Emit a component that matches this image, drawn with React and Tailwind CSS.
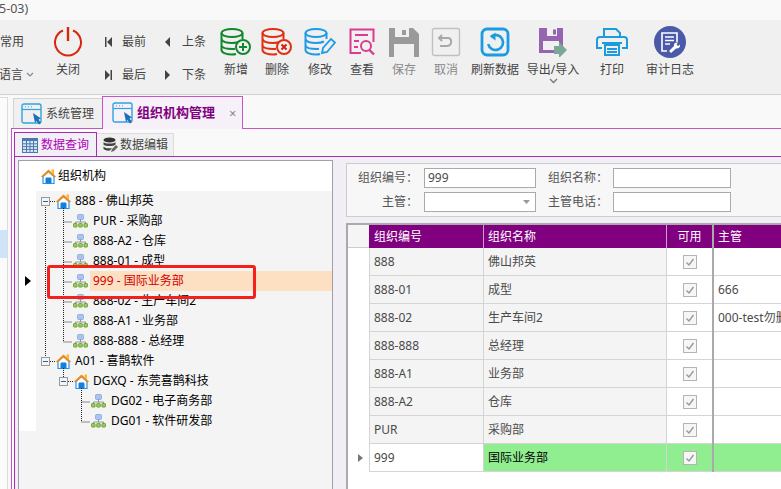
import React from "react";

function Power() {
    return (
        <svg width="30" height="30" viewBox="0 0 30 30" fill="none" stroke="#d9250c" strokeWidth="2">
            <path d="M10 3.5 A13 13 0 1 0 20 3.5" />
            <path d="M15 0 V14" stroke="#d9250c" strokeWidth="2.4" />
        </svg>
    );
}

function DbStack({ color }) {
    return (
        <g fill="none" stroke={color} strokeWidth="2">
            <ellipse cx="12" cy="6" rx="10.5" ry="4" />
            <path d="M1.5 6 V23 C1.5 26 7 27.5 12 27.5 C14 27.5 15 27.3 16 27" />
            <path d="M22.5 6 V12" />
            <path d="M1.5 12.5 C3 15.5 8 16 12 16 C15 16 18 15.5 20 14.5" />
            <path d="M1.5 19 C3 21.5 8 22 12 22 C13 22 14 22 15 21.8" />
        </g>
    );
}

function DbAdd() {
    return (
        <svg width="32" height="30" viewBox="0 0 32 30">
            <DbStack color="#12882c" />
            <circle cx="23" cy="20" r="7" fill="#f0f0f0" stroke="#12882c" strokeWidth="2" />
            <path d="M23 16 V24 M19 20 H27" stroke="#12882c" strokeWidth="2" />
        </svg>
    );
}

function DbDelete() {
    return (
        <svg width="32" height="30" viewBox="0 0 32 30">
            <DbStack color="#e0300f" />
            <circle cx="23" cy="20" r="7" fill="#f0f0f0" stroke="#e0300f" strokeWidth="2" />
            <path d="M20.5 17.5 L25.5 22.5 M25.5 17.5 L20.5 22.5" stroke="#d0200f" strokeWidth="2" />
        </svg>
    );
}

function DbEdit() {
    return (
        <svg width="32" height="30" viewBox="0 0 32 30">
            <DbStack color="#1f9be6" />
            <path d="M18 26 L19 21 L27 12 L31 15.5 L23 25 Z" fill="#f0f0f0" stroke="#1f9be6" strokeWidth="1.8" />
        </svg>
    );
}

function ViewDoc() {
    return (
        <svg width="30" height="30" viewBox="0 0 30 30" fill="none" stroke="#dc3a8e" strokeWidth="2">
            <path d="M14 26 H3.5 V2.5 H26.5 V15" />
            <path d="M8 8 H21 M7 14 H12 M7 20 H11" />
            <circle cx="19" cy="19" r="5" />
            <path d="M22.5 23 L27 27.5" strokeWidth="2.4" />
        </svg>
    );
}

function Floppy() {
    return (
        <svg width="30" height="30" viewBox="0 0 30 30">
            <path d="M0 1 H24 L30 7 V30 H0 Z" fill="#9a9a9a" />
            <rect x="6" y="1" width="14" height="9" fill="#f0f0f0" />
            <rect x="13" y="3" width="4" height="5" fill="#9a9a9a" />
            <rect x="5" y="17" width="20" height="13" fill="#f0f0f0" />
        </svg>
    );
}

function UndoBox() {
    return (
        <svg width="30" height="30" viewBox="0 0 30 30" fill="none">
            <rect x="1.5" y="1.5" width="27" height="27" rx="2" stroke="#c0c0c0" strokeWidth="1.4" />
            <path d="M11 8 L8 11 L11 14" stroke="#a8a8a8" strokeWidth="2" />
            <path d="M8.5 11 H17 C20 11 20.5 14 20 16 C19.5 18 18 19 16 19 H9" stroke="#a8a8a8" strokeWidth="2" />
        </svg>
    );
}

function RefreshBox() {
    return (
        <svg width="30" height="30" viewBox="0 0 30 30" fill="none">
            <rect x="2" y="2" width="26" height="26" rx="5" stroke="#1b9be2" strokeWidth="2.8" />
            <path d="M11 9.5 A7.5 7.5 0 1 1 8.2 17" stroke="#1b9be2" strokeWidth="2.6" />
            <path d="M15.5 5.5 L10 9.5 L15.5 13.5 Z" fill="#1b9be2" />
        </svg>
    );
}

function ExportIcon() {
    return (
        <svg width="30" height="30" viewBox="0 0 30 30">
            <path d="M1 1 H25 V26 H1 Z" fill="#9565b0" />
            <rect x="9" y="1" width="10" height="8" fill="#f0f0f0" />
            <rect x="15" y="2.5" width="3" height="5" fill="#9565b0" />
            <rect x="5" y="14" width="16" height="9" fill="#f0f0f0" />
            <path d="M16 19 H21 V15 L29 23 L21 31 V27 H16 Z" fill="#7ba896" />
        </svg>
    );
}

function Printer() {
    return (
        <svg width="34" height="30" viewBox="0 0 34 30" fill="none" stroke="#1c9cdf" strokeWidth="2">
            <path d="M9 9 V2 H21 L25 6 V9" />
            <path d="M7 21 H2 V13 C2 11 3 10 5 10 H29 C31 10 32 11 32 13 V21 H27" />
            <path d="M7 16 H27" />
            <rect x="10" y="18" width="14" height="10" fill="#f0f0f0" />
            <path d="M12 22 H22 M12 25 H22" />
        </svg>
    );
}

function AuditIcon() {
    return (
        <svg width="32" height="32" viewBox="0 0 32 32" fill="none">
            <circle cx="16" cy="16" r="16" fill="#4a5aa9" />
            <path d="M13 25 H8 V7 H23 V16" stroke="#fff" strokeWidth="1.6" />
            <path d="M11 11 H20 M11 14.5 H20 M11 18 H16" stroke="#fff" strokeWidth="1.5" />
            <path d="M15 25 L20 20 C19.5 18 21 16 24 16.5 L22.5 18.5 L24 20 L26 18.5 C26.5 21 24.5 23 22 22.5 L17 27 Z" fill="#fff" />
        </svg>
    );
}

function WindowIcon() {
    return (
        <svg width="21" height="22" viewBox="0 0 21 22" fill="none">
            <rect x="1" y="1" width="19" height="19" rx="2" stroke="#2ea3e0" strokeWidth="1.4" />
            <path d="M1 6.5 H20" stroke="#2ea3e0" strokeWidth="1.2" />
            <path d="M4 3.8 H5 M7 3.8 H8 M10 3.8 H11" stroke="#2ea3e0" />
            <path d="M12 10 L20 15.5 L17.5 16.5 L20 20 L18 21.5 L15.5 18 L14 20 Z" fill="#1e6fb8" />
        </svg>
    );
}

function GridIcon() {
    return (
        <svg width="16" height="15" viewBox="0 0 16 15">
            <rect x="0" y="0" width="16" height="15" fill="#4c78ae" />
            <rect x="1" y="3" width="14" height="11" fill="#dbe6f2" />
            <path d="M4.5 3 V14 M8 3 V14 M11.5 3 V14 M1 5.8 H15 M1 8.6 H15 M1 11.4 H15" stroke="#4c78ae" />
        </svg>
    );
}

function DbDark() {
    return (
        <svg width="15" height="16" viewBox="0 0 15 16">
            <ellipse cx="6.5" cy="3" rx="6" ry="2.6" fill="#333" />
            <path d="M0.5 5 C2 7 11 7 12.5 5 V7.5 C11 9.5 2 9.5 0.5 7.5 Z" fill="#444" />
            <path d="M0.5 9.5 C2 11.5 7 11.5 9 11 L7 13.5 C4 14 1.5 13 0.5 12 Z" fill="#444" />
            <path d="M8 15 L9 12 L13 8 L15 10 L11 14 Z" fill="#666" />
        </svg>
    );
}

function HomeIcon() {
    return (
        <svg width="15" height="15" viewBox="0 0 15 15">
            <path d="M10.5 0.5 H13 V5.5 L10.5 3 Z" fill="#f7b733" />
            <path d="M2 7.5 L7.5 2.5 L13 7.5 V14.5 H2 Z" fill="#fdfdfd" stroke="#2b93e6" strokeWidth="1.2" />
            <path d="M0 7.5 L7.5 0.5 L15 7.5 L13.6 8.6 L7.5 3.2 L1.4 8.6 Z" fill="#f28a12" />
            <rect x="4.5" y="8.5" width="6" height="6" rx="1.2" fill="#1380dc" />
        </svg>
    );
}

function OrgIcon() {
    return (
        <svg width="15" height="14" viewBox="0 0 15 14">
            <rect x="4.5" y="0.5" width="6" height="5" rx="1" fill="#a9c4f2" stroke="#7d9fd8" strokeWidth="0.7" />
            <path d="M7.5 5.5 V8 M2.5 9.5 V8 H12.5 V9.5" stroke="#8a8a8a" fill="none" strokeWidth="0.9" />
            <rect x="0.5" y="9.5" width="3.6" height="3.6" rx="0.6" fill="#9cc95c" stroke="#5f9a2a" strokeWidth="0.8" />
            <rect x="5.7" y="9.5" width="3.6" height="3.6" rx="0.6" fill="#9cc95c" stroke="#5f9a2a" strokeWidth="0.8" />
            <rect x="10.9" y="9.5" width="3.6" height="3.6" rx="0.6" fill="#9cc95c" stroke="#5f9a2a" strokeWidth="0.8" />
        </svg>
    );
}

function Check() {
    return (
        <div className="flex h-[14px] w-[14px] items-center justify-center border border-[#b4b4b4] bg-[#f6f6f6]">
            <svg width="10" height="10" viewBox="0 0 10 10" fill="none" stroke="#999" strokeWidth="1.4">
                <path d="M1.5 5.5 L4 8 L8.5 2" />
            </svg>
        </div>
    );
}

const TOOLS = [
    { label: "新增", width: "w-[48px]", icon: <DbAdd /> },
    { label: "删除", width: "w-[34px]", icon: <DbDelete /> },
    { label: "修改", width: "w-[52px]", icon: <DbEdit /> },
    { label: "查看", width: "w-[32px]", icon: <ViewDoc /> },
    { label: "保存", width: "w-[52px]", icon: <Floppy />, muted: true },
    { label: "取消", width: "w-[32px]", icon: <UndoBox />, muted: true },
    { label: "刷新数据", width: "w-[66px]", icon: <RefreshBox /> },
    { label: "导出/导入", width: "w-[50px]", icon: <ExportIcon />, more: true },
    { label: "打印", width: "w-[68px]", icon: <Printer /> },
    { label: "审计日志", width: "w-[48px]", icon: <AuditIcon /> },
];

function ToolButton({ label, width, icon, muted, more }) {
    return (
        <div className={`flex shrink-0 flex-col items-center pt-[6px] ${width}`}>
            <div className="flex h-[31px] items-center justify-center">{icon}</div>
            <span className={`mt-[5px] whitespace-nowrap leading-[16px] ${muted ? "text-[#888]" : "text-[#444]"}`}>{label}</span>
            {more && (
                <svg width="9" height="6" viewBox="0 0 9 6" fill="none" stroke="#777" strokeWidth="1.3">
                    <path d="M1 1 L4.5 4.5 L8 1" />
                </svg>
            )}
        </div>
    );
}

function NavButton({ dir, label }) {
    const paths = {
        first: "M1 1 H2.5 V11 H1 Z M8 1 V11 L3 6 Z",
        prev: "M6 1 V11 L1 6 Z",
        last: "M1 1 V11 L6 6 Z M6.5 1 H8 V11 H6.5 Z",
        next: "M1 1 V11 L6 6 Z",
    };
    return (
        <div className="flex h-[16px] w-[60px] items-center">
            <div className="flex w-[30px] justify-center pl-[2px]">
                <svg width="9" height="12" viewBox="0 0 9 12" fill="#444">
                    <path d={paths[dir]} />
                </svg>
            </div>
            <span className="text-[#444]">{label}</span>
        </div>
    );
}

const TREE = [
    { text: "888 - 佛山邦英", type: "home", depth: 0 },
    { text: "PUR - 采购部", type: "org", depth: 1 },
    { text: "888-A2 - 仓库", type: "org", depth: 1 },
    { text: "888-01 - 成型", type: "org", depth: 1 },
    { text: "999 - 国际业务部", type: "org", depth: 1, active: true },
    { text: "888-02 - 生产车间2", type: "org", depth: 1 },
    { text: "888-A1 - 业务部", type: "org", depth: 1 },
    { text: "888-888 - 总经理", type: "org", depth: 1 },
    { text: "A01 - 喜鹊软件", type: "home", depth: 0 },
    { text: "DGXQ - 东莞喜鹊科技", type: "home", depth: 1 },
    { text: "DG02 - 电子商务部", type: "org", depth: 2 },
    { text: "DG01 - 软件研发部", type: "org", depth: 2 },
];

function ExpandBox() {
    return (
        <div className="flex h-[9px] w-[9px] shrink-0 items-center justify-center border border-[#9a9a9a] bg-[#f4f4f4]">
            <div className="h-px w-[5px] bg-[#2f5fa8]" />
        </div>
    );
}

function TreeRow({ text, type, depth, active }) {
    const indent = depth === 0 ? "pl-[5px]" : depth === 1 ? "pl-[23px]" : "pl-[41px]";
    return (
        <div className="flex h-[20px]">
            <div className="flex w-[17px] shrink-0 items-center justify-center bg-white">
                {active && (
                    <svg width="6" height="10" viewBox="0 0 6 10" fill="#000">
                        <path d="M0 0 L6 5 L0 10 Z" />
                    </svg>
                )}
            </div>
            <div className={`flex flex-1 items-center ${indent}`}>
                {type === "home" ? (
                    <>
                        <ExpandBox />
                        <div className="ml-[6px]">
                            <HomeIcon />
                        </div>
                        <span className="ml-[4px] whitespace-nowrap text-black">{text}</span>
                    </>
                ) : (
                    <>
                        <div className="ml-[14px]">
                            <OrgIcon />
                        </div>
                        <span className={`ml-[2px] flex h-[20px] flex-1 items-center whitespace-nowrap pl-[3px] ${active ? "bg-[#fddfc1] text-[#d40000]" : "text-black"}`}>
                            {text}
                        </span>
                    </>
                )}
            </div>
        </div>
    );
}

function TreePanel() {
    return (
        <div className="relative w-[315px] shrink-0 border border-b-0 border-[#a0a0a8] bg-[#f4f4f4]">
            <div className="flex h-[30px] items-center bg-white pl-[22px]">
                <HomeIcon />
                <span className="ml-[2px] text-black">组织机构</span>
            </div>
            {TREE.map((row) => (
                <TreeRow key={row.text} {...row} />
            ))}
            <svg width="120" height="250" className="absolute left-0 top-[30px]" fill="none" stroke="#222" strokeDasharray="1 1">
                <path d="M26.5 16 V166" />
                <path d="M31 10.5 H36" />
                <path d="M44.5 17 V151 M44.5 31 H53 M44.5 51 H53 M44.5 71 H53 M44.5 91 H53 M44.5 111 H53 M44.5 131 H53 M44.5 151 H53" />
                <path d="M31 170.5 H36" />
                <path d="M44.5 177 V186" />
                <path d="M49 190.5 H54" />
                <path d="M62.5 197 V231 M62.5 211 H71 M62.5 231 H71" />
            </svg>
        </div>
    );
}

const ROWS = [
    ["888", "佛山邦英", ""],
    ["888-01", "成型", "666"],
    ["888-02", "生产车间2", "000-test勿删"],
    ["888-888", "总经理", ""],
    ["888-A1", "业务部", ""],
    ["888-A2", "仓库", ""],
    ["PUR", "采购部", ""],
];

const gridCols = "grid grid-cols-[21px_115px_183px_45px_2px_80px]";

function GridRow({ row }) {
    const cell = "flex items-center border-b border-r border-[#d4d4d4] px-[4px]";
    return (
        <div className={`${gridCols} h-[28px]`}>
            <div className="bg-white" />
            <div className={`${cell} border-l bg-[#f4f4f4] text-[#4a4a4a]`}>{row[0]}</div>
            <div className={`${cell} bg-[#f4f4f4] text-[#4a4a4a]`}>{row[1]}</div>
            <div className="flex items-center justify-center border-b border-[#d4d4d4] bg-white">
                <Check />
            </div>
            <div className="bg-[#aaa]" />
            <div className="flex items-center overflow-hidden whitespace-nowrap border-b border-[#d4d4d4] bg-white pl-[4px] text-[#4a4a4a]">{row[2]}</div>
        </div>
    );
}

function DataGrid() {
    return (
        <div className="mt-[6px] flex-1 overflow-hidden border-l-2 border-t-2 border-[#aaa] bg-white">
            <div className={`${gridCols} h-[23px] text-white`}>
                <div className="border-b border-[#ccc] bg-[#f5f5f5]" />
                <div className="flex items-center border-r border-[#c9a0c9] bg-[#800080] pl-[5px]">组织编号</div>
                <div className="flex items-center border-r border-[#c9a0c9] bg-[#800080] pl-[4px]">组织名称</div>
                <div className="flex items-center justify-center bg-[#800080]">可用</div>
                <div className="bg-[#aaa]" />
                <div className="flex items-center bg-[#800080] pl-[4px]">主管</div>
            </div>
            {ROWS.map((row) => (
                <GridRow key={row[0]} row={row} />
            ))}
            <div className={`${gridCols} h-[28px]`}>
                <div className="flex items-center justify-center bg-white pl-[4px]">
                    <svg width="5" height="8" viewBox="0 0 5 8" fill="#777">
                        <path d="M0 0 L5 4 L0 8 Z" />
                    </svg>
                </div>
                <div className="flex items-center border-b border-l border-r border-[#d4d4d4] bg-white px-[4px] text-[#4a4a4a]">999</div>
                <div className="flex items-center border-b border-r border-[#d4d4d4] bg-[#90ee90] px-[4px] text-black">国际业务部</div>
                <div className="flex items-center justify-center border-b border-[#d4d4d4] bg-[#90ee90]">
                    <Check />
                </div>
                <div className="bg-[#aaa]" />
                <div className="border-b border-[#d4d4d4] bg-[#90ee90]" />
            </div>
        </div>
    );
}

function FilterPanel() {
    const input = "h-[20px] border border-[#aaa] bg-white px-[3px] leading-[18px] text-[#4a4a4a]";
    return (
        <div className="mt-[3px] grid h-[54px] shrink-0 grid-cols-[71px_118px_77px_118px] content-center items-center gap-y-[4px] whitespace-nowrap border border-r-0 border-[#ccc] bg-[#f7f7f7] text-[#555]">
            <div className="text-right">组织编号：</div>
            <div className={`${input} ml-[6px] w-[112px]`}>999</div>
            <div className="pl-[12px]">组织名称：</div>
            <div className={`${input} w-[118px]`} />
            <div className="text-right">主管：</div>
            <div className={`${input} ml-[6px] flex w-[112px] items-center justify-end pr-[5px]`}>
                <svg width="7" height="4" viewBox="0 0 7 4" fill="#999">
                    <path d="M0 0 H7 L3.5 4 Z" />
                </svg>
            </div>
            <div className="pl-[12px]">主管电话：</div>
            <div className={`${input} w-[118px]`} />
        </div>
    );
}

export default function App() {
    return (
        <div
            className="relative flex h-[489px] w-[781px] flex-col overflow-hidden bg-[#f9f9f9] text-[12px]"
            style={{ fontFamily: '"Noto Sans", "Noto Sans CJK SC", sans-serif' }}
        >
            <div className="h-[20px] shrink-0 pl-0 text-[12.5px] leading-[18px] text-[#555]">
                <span className="ml-[-1px] block">5-03)</span>
            </div>

            {/* ribbon */}
            <div className="flex h-[75px] shrink-0 border-b border-[#d2d2d2] bg-[#f0f0f0]">
                <div className="flex w-[44px] shrink-0 flex-col pt-[14px] text-[#444]">
                    <span className="leading-[16px]">常用</span>
                    <span className="mt-[17px] flex items-center whitespace-nowrap leading-[16px]">
                        <span className="ml-[-1px]">语言</span>
                        <svg width="8" height="6" viewBox="0 0 8 6" fill="none" stroke="#888" strokeWidth="1.2" className="ml-[3px]">
                            <path d="M1 1 L4 4 L7 1" />
                        </svg>
                    </span>
                </div>
                <div className="flex w-[48px] shrink-0 flex-col items-center pt-[6px]">
                    <div className="flex h-[31px] items-center justify-center">
                        <Power />
                    </div>
                    <span className="mt-[5px] leading-[16px] text-[#444]">关闭</span>
                </div>
                <div className="grid w-[120px] shrink-0 grid-cols-2 content-start gap-y-[17px] pt-[14px]">
                    <NavButton dir="first" label="最前" />
                    <NavButton dir="prev" label="上条" />
                    <NavButton dir="last" label="最后" />
                    <NavButton dir="next" label="下条" />
                </div>
                {TOOLS.map((tool) => (
                    <ToolButton key={tool.label} {...tool} />
                ))}
            </div>

            <div className="flex min-h-0 flex-1">
                {/* collapsed side menu */}
                <div className="mt-[2px] w-[8px] shrink-0 border-r border-t border-[#dcdcdc] bg-[#fbfbfb] pt-[132px]">
                    <div className="h-[28px] bg-[#cfe4f7]" />
                </div>

                <div className="flex min-w-0 flex-1 flex-col pl-[3px]">
                    {/* module tabs */}
                    <div className="relative flex h-[34px] shrink-0 items-end border-b border-[#c855c8] pl-[2px]">
                        <div className="flex h-[30px] w-[89px] items-center gap-[4px] border-l border-t border-[#d4d4d4] bg-[#f0f0f0] pl-[7px] text-[#444]">
                            <WindowIcon />
                            <span>系统管理</span>
                        </div>
                        <div className="mb-[-1px] flex h-[33px] w-[141px] items-center border border-b-0 border-[#c855c8] bg-[#f6f0f8] pl-[9px]">
                            <WindowIcon />
                            <span className="ml-[4px] text-[13px] font-bold text-[#800080]">组织机构管理</span>
                            <span className="ml-[14px] text-[13px] leading-none text-[#888]">×</span>
                        </div>
                    </div>

                    <div className="flex min-h-0 flex-1 flex-col border-l border-[#c855c8] pl-[2px]">
                        {/* query / edit tabs */}
                        <div className="flex h-[27px] shrink-0 items-end">
                            <div className="mb-[-1px] flex h-[25px] w-[83px] items-center gap-[3px] border-x border-t border-[#a030b0] bg-[#f3eff7] pl-[7px] text-[#b000b8]">
                                <GridIcon />
                                <span>数据查询</span>
                            </div>
                            <div className="flex h-[23px] w-[77px] items-center gap-[2px] border-r border-t border-[#dcdcdc] bg-[#f0f0f0] pl-[6px] text-[#444]">
                                <DbDark />
                                <span>数据编辑</span>
                            </div>
                            <div className="h-[23px] flex-1" />
                        </div>

                        <div className="flex min-h-0 flex-1 border-l border-t border-[#a030b0] bg-[#f2eef6] pl-[3px] pt-[3px]">
                            <TreePanel />
                            <div className="ml-[13px] flex min-w-0 flex-1 flex-col">
                                <FilterPanel />
                                <DataGrid />
                            </div>
                        </div>
                    </div>
                </div>
            </div>

            {/* red annotation around the selected node */}
            <div className="absolute left-[47px] top-[265px] h-[34px] w-[209px] rounded-[3px] border-[3px] border-[#f5201c]" />
        </div>
    );
}
